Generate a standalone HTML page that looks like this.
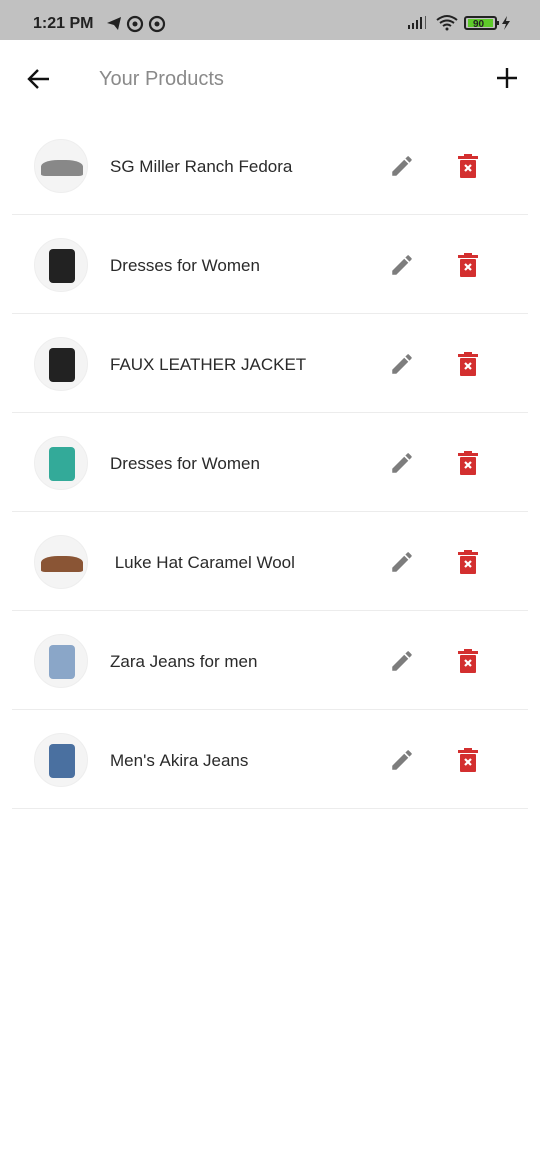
<!DOCTYPE html>
<html><head><style>
body{margin:0;width:540px;height:1170px;background:#fff;font-family:"Liberation Sans",sans-serif;position:relative;overflow:hidden}
.sb{position:absolute;top:0;left:0;width:540px;height:40px;background:#c1c1c1}
.row{position:absolute;left:0;width:540px;height:99px}
.av{position:absolute;left:34px;top:-27px;width:54px;height:54px;border-radius:50%;background:#f4f4f4;border:1px solid #eee;box-sizing:border-box;overflow:hidden}
.t{position:absolute;left:110px;top:-9px;font-size:17px;color:#2a2a2a}
.ed{position:absolute;left:389px;top:-13px}
.dl{position:absolute;left:457px;top:-13px}
.dv{position:absolute;left:12px;width:516px;top:48px;height:1px;background:#ececec}
</style></head><body>
<div class="sb">
<span style="position:absolute;left:33px;top:15px;font-size:16px;font-weight:bold;color:#222">1:21 PM</span>
<svg style="position:absolute;left:106px;top:15px" width="70" height="18"><path d="M1 8 L15 2 L12 15 L8 10 Z" fill="#222"/><circle cx="29" cy="9" r="7" fill="none" stroke="#222" stroke-width="2.2"/><circle cx="29" cy="9" r="2.5" fill="#222"/><circle cx="51" cy="9" r="7" fill="none" stroke="#222" stroke-width="2.2"/><circle cx="51" cy="9" r="2.5" fill="#222"/></svg>
<svg style="position:absolute;left:406px;top:14px" width="110" height="18"><rect x="2" y="11" width="2" height="4" fill="#222"/><rect x="6" y="9" width="2" height="6" fill="#222"/><rect x="10" y="6" width="2" height="9" fill="#222"/><rect x="14" y="3" width="2" height="12" fill="#222"/><rect x="19" y="2" width="1" height="13" fill="#555"/><path d="M31 6 Q41 -2 51 6 M34 9 Q41 4 48 9 M37 12 Q41 9 45 12" stroke="#222" stroke-width="2" fill="none"/><circle cx="41" cy="15" r="1.5" fill="#222"/><rect x="59" y="3" width="31" height="12" rx="2" fill="none" stroke="#222" stroke-width="2"/><rect x="62" y="5" width="25" height="8" fill="#5ecb2a"/><text x="67" y="13" font-size="10" font-weight="bold" fill="#222">90</text><rect x="91" y="7" width="2" height="4" fill="#222"/><path d="M101 2 L96 10 L100 10 L98 16 L104 7 L100 7 Z" fill="#222"/></svg>
</div>
<svg style="position:absolute;left:26px;top:67px" width="26" height="24"><path d="M23 12 H4 M12 3 L3 12 L12 21" stroke="#111" stroke-width="2.4" fill="none"/></svg>
<span style="position:absolute;left:99px;top:68px;font-size:20px;color:#8a8a8a">Your Products</span>
<svg style="position:absolute;left:496px;top:67px" width="22" height="22"><path d="M11 1 V21 M1 11 H21" stroke="#111" stroke-width="2.4"/></svg>

<div id="list"></div>
<script>
const items=[["SG Miller Ranch Fedora","#888"],["Dresses for Women","#222"],["FAUX LEATHER JACKET","#222"],["Dresses for Women","#3a9"],[" Luke Hat Caramel Wool","#8a5535"],["Zara Jeans for men","#8aa6c8"],["Men's Akira Jeans","#4a70a0"]];
let h="";
items.forEach((it,i)=>{const y=166+i*99;
h+=`<div class="row" style="top:${y}px"><div class="av"><div style="position:absolute;left:14px;top:10px;width:26px;height:34px;background:${it[1]};border-radius:${i==0||i==4?'40% 40% 10% 10%':'4px'};${i==0||i==4?'left:6px;width:42px;height:16px;top:20px':''}"></div></div><div class="t">${it[0].replace(/ /g,'&nbsp;')}</div>
<svg class="ed" width="26" height="26" viewBox="0 0 24 24"><path d="M3 17.25V21h3.75L17.81 9.94l-3.75-3.75L3 17.25zM20.71 7.04a1 1 0 0 0 0-1.41l-2.34-2.34a1 1 0 0 0-1.41 0l-1.83 1.83 3.75 3.75 1.83-1.830z" fill="#7d7d7d"/></svg>
<svg class="dl" width="22" height="26" viewBox="0 0 22 26"><rect x="7" y="1" width="8" height="3" fill="#d32f2f"/><rect x="1" y="3" width="20" height="3" fill="#d32f2f"/><rect x="3" y="7" width="16" height="18" rx="1" fill="#d32f2f"/><path d="M8 12 L14 18 M14 12 L8 18" stroke="#fff" stroke-width="2.2"/></svg>
<div class="dv"></div></div>`;});
document.getElementById("list").innerHTML=h;
</script>
</body></html>
